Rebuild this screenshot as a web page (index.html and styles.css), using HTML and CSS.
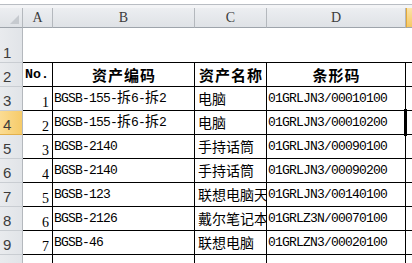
FILE: index.html
```html
<!DOCTYPE html>
<html lang="zh-CN">
<head>
    <meta charset="UTF-8">
    <meta name="viewport" content="width=device-width, initial-scale=1.0">
    <title>资产清单</title>
    <link rel="stylesheet" href="styles.css">
</head>
<body>
    <div class="topbar"></div>
    <div class="sheet">
        <!-- column headers -->
        <div class="corner"><span class="tri"></span></div>
        <div class="colhead">A</div>
        <div class="colhead">B</div>
        <div class="colhead">C</div>
        <div class="colhead">D</div>
        <div class="colhead colhead-sel"></div>

        <!-- row 1 -->
        <div class="rowhead">1</div>
        <div class="blank"></div>
        <div class="blank"></div>
        <div class="blank"></div>
        <div class="blank"></div>
        <div class="blank"></div>

        <!-- row 2 -->
        <div class="rowhead">2</div>
        <div class="cell th th-no">No.</div>
        <div class="cell th">资产编码</div>
        <div class="cell th">资产名称</div>
        <div class="cell th">条形码</div>
        <div class="cell"></div>

        <div class="rowhead">3</div>
        <div class="cell num">1</div>
        <div class="cell">BGSB-155-<span class="zh">拆</span>6-<span class="zh">拆</span>2</div>
        <div class="cell zh">电脑</div>
        <div class="cell">01GRLJN3/00010100</div>
        <div class="cell"></div>

        <div class="rowhead rowhead-sel">4</div>
        <div class="cell num">2</div>
        <div class="cell">BGSB-155-<span class="zh">拆</span>6-<span class="zh">拆</span>2</div>
        <div class="cell zh">电脑</div>
        <div class="cell">01GRLJN3/00010200</div>
        <div class="cell active"></div>

        <div class="rowhead">5</div>
        <div class="cell num">3</div>
        <div class="cell">BGSB-2140</div>
        <div class="cell zh">手持话筒</div>
        <div class="cell">01GRLJN3/00090100</div>
        <div class="cell"></div>

        <div class="rowhead">6</div>
        <div class="cell num">4</div>
        <div class="cell">BGSB-2140</div>
        <div class="cell zh">手持话筒</div>
        <div class="cell">01GRLJN3/00090200</div>
        <div class="cell"></div>

        <div class="rowhead">7</div>
        <div class="cell num">5</div>
        <div class="cell">BGSB-123</div>
        <div class="cell zh">联想电脑天逸</div>
        <div class="cell">01GRLJN3/00140100</div>
        <div class="cell"></div>

        <div class="rowhead">8</div>
        <div class="cell num">6</div>
        <div class="cell">BGSB-2126</div>
        <div class="cell zh">戴尔笔记本电脑</div>
        <div class="cell">01GRLZ3N/00070100</div>
        <div class="cell"></div>

        <div class="rowhead">9</div>
        <div class="cell num">7</div>
        <div class="cell">BGSB-46</div>
        <div class="cell zh">联想电脑</div>
        <div class="cell">01GRLZN3/00020100</div>
        <div class="cell"></div>

        <div class="rowhead"></div>
        <div class="cell num"></div>
        <div class="cell"></div>
        <div class="cell"></div>
        <div class="cell"></div>
        <div class="cell"></div>
    </div>
</body>
</html>
```

FILE: styles.css
```css
body {
    margin: 0;
    background: #fff;
    overflow: hidden;
    font-family: "Liberation Sans", Arial, sans-serif;
}
.topbar {
    height: 8px;
    box-sizing: border-box;
    border-top: 4px solid #fff;
    background: #f3f4f6;
    box-shadow: inset 0 1px 0 #b9bdc3;
}
.sheet {
    display: grid;
    grid-template-columns: 23px 30px 142px 72px 139px 60px;
    grid-template-rows: 20px 35px 24px repeat(8, 24px);
}
.corner {
    position: relative;
    background: linear-gradient(#eceef1, #dfe2e6);
    border-right: 1px solid #b4b8bd;
    border-bottom: 1px solid #9ea4ab;
}
.tri {
    position: absolute;
    right: 3px;
    bottom: 3px;
    width: 0;
    height: 0;
    border-left: 9px solid transparent;
    border-bottom: 9px solid #c6cacf;
}
.colhead {
    background: linear-gradient(#eceef1, #dfe2e6);
    border-right: 1px solid #b4b8bd;
    border-bottom: 1px solid #9ea4ab;
    color: #3c3c3c;
    font-family: "Liberation Serif", serif;
    font-size: 14px;
    line-height: 19px;
    text-align: center;
}
.colhead-sel {
    background: linear-gradient(#fbe3a8, #f5c863);
    border-left: 1px solid #e2a93a;
}
.rowhead {
    background: linear-gradient(90deg, #e9ebee, #e1e4e8);
    border-right: 1px solid #b4b8bd;
    border-bottom: 1px solid #c9cdd2;
    color: #3c3c3c;
    font-size: 15px;
    padding-left: 3px;
    display: flex;
    align-items: flex-end;
    line-height: 18px;
}
.rowhead-sel {
    background: linear-gradient(90deg, #fbdc93, #f6cb69);
    border-bottom-color: #e2b04c;
}
.blank {
    border-bottom: 1px solid #000;
}
.cell {
    border-right: 1px solid #000;
    border-bottom: 1px solid #000;
    font-family: "Liberation Mono", "Noto Sans CJK SC", monospace;
    font-size: 13px;
    letter-spacing: -0.8px;
    color: #000;
    padding-left: 1px;
    white-space: nowrap;
    overflow: hidden;
    line-height: 23px;
}
.zh {
    font-family: "Noto Sans CJK SC", sans-serif;
    font-size: 14px;
    letter-spacing: 0;
    line-height: 1;
}
.cell.zh {
    padding-left: 3px;
    line-height: 23px;
}
.num {
    font-family: "Liberation Serif", serif;
    font-size: 14px;
    letter-spacing: 0;
    text-align: right;
    padding-right: 3px;
    box-sizing: border-box;
    padding-top: 8px;
    line-height: 15px;
}
.th {
    text-align: center;
    font-family: "Noto Sans CJK SC", sans-serif;
    font-weight: bold;
    font-size: 15px;
    letter-spacing: 1px;
    line-height: 24px;
}
.th-no {
    text-align: left;
    font-family: "Liberation Mono", monospace;
    font-size: 13.3px;
    letter-spacing: 0;
    padding-left: 2px;
}
.active {
    position: relative;
    overflow: visible;
}
.active::before {
    content: "";
    position: absolute;
    left: -2px;
    top: -2px;
    bottom: -2px;
    width: 3px;
    background: #000;
}
```
